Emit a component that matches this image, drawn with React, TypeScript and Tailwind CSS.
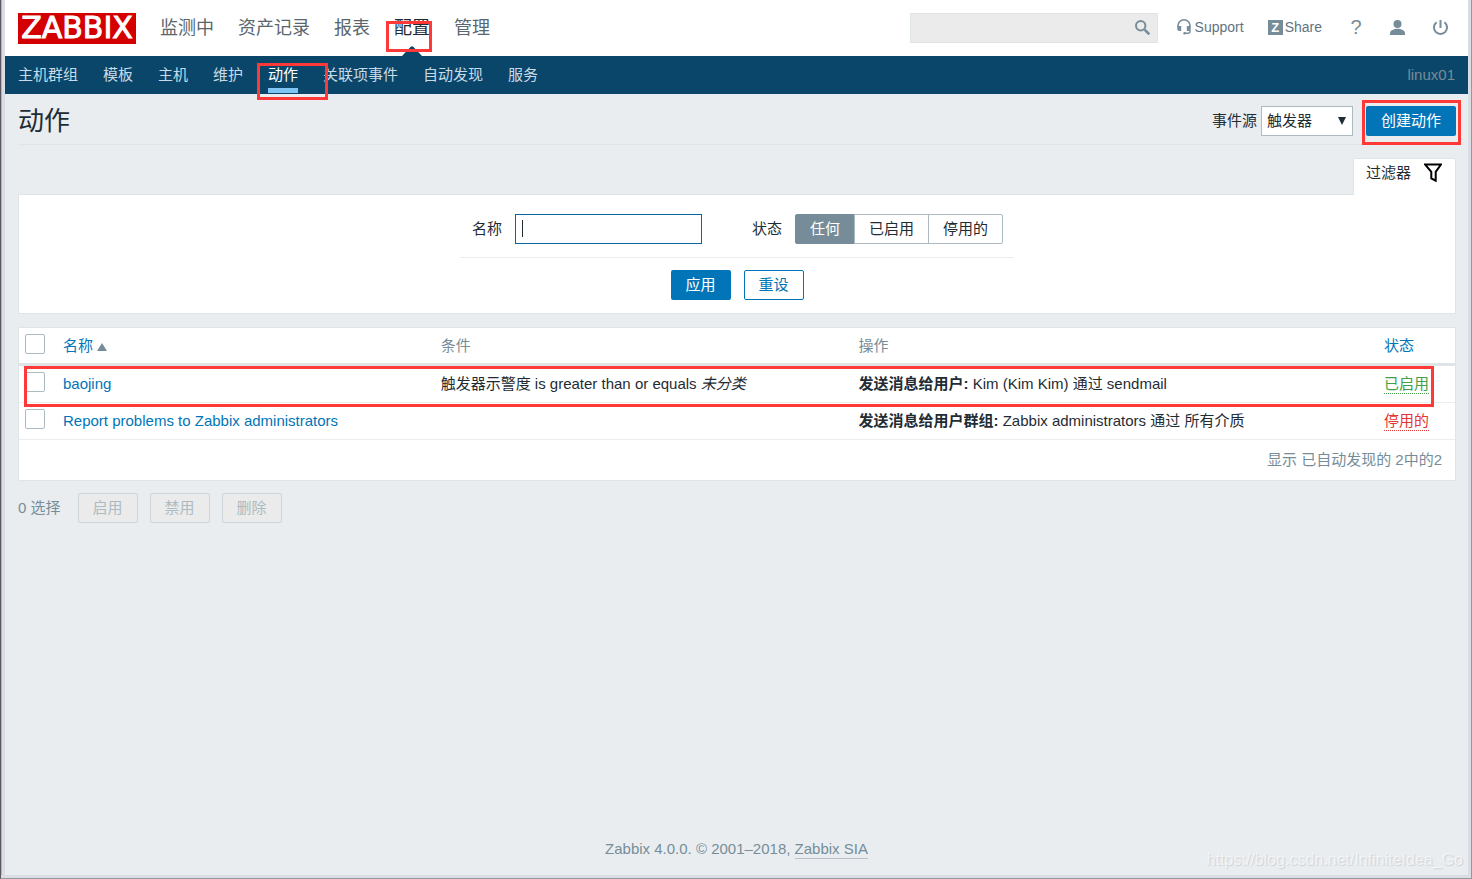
import React, { useState } from "react";

const topMenu = ["监测中", "资产记录", "报表", "配置", "管理"];
const subMenu = ["主机群组", "模板", "主机", "维护", "动作", "关联项事件", "自动发现", "服务"];

function Highlight({ className }: { className: string }) {
  return (
    <span
      aria-hidden="true"
      className={`pointer-events-none absolute z-10 border-3 border-[#ff3838] ${className}`}
    />
  );
}

function SearchIcon() {
  return (
    <svg width="15" height="15" viewBox="0 0 15 15" fill="none" stroke="#768d99">
      <circle cx="5.7" cy="5.7" r="4.7" strokeWidth="2" />
      <path d="M9.2 9.2l1 1" strokeWidth="1.6" />
      <path d="M10 10l4.3 4.3" strokeWidth="2.6" />
    </svg>
  );
}

function HeadsetIcon() {
  return (
    <svg width="14" height="16" viewBox="0 0 14 16" fill="none">
      <path d="M1 8V6.800a6 6 0 0 1 12 0V8" stroke="#768d99" strokeWidth="1.600" />
      <path d="M.3 7h3.900v5H2.100A1.800 1.800 0 0 1 .3 10.200zM13.700 7H9.800v5h2.100a1.800 1.800 0 0 0 1.800-1.800z" fill="#768d99" />
      <path d="M13 11v1.300a1.900 1.900 0 0 1-1.900 1.900H7" stroke="#768d99" strokeWidth="1.400" />
      <circle cx="7.600" cy="14.200" r="1.300" fill="#768d99" />
    </svg>
  );
}

function UserIcon() {
  return (
    <svg width="15" height="15" viewBox="0 0 15 15" fill="#768d99">
      <circle cx="7.500" cy="4" r="4" />
      <path d="M0 15v-1.700c0-2.800 4-4.500 7.500-4.500s7.500 1.700 7.500 4.500V15z" />
    </svg>
  );
}

function PowerIcon() {
  return (
    <svg width="15" height="15" viewBox="0 0 15 15" fill="none" stroke="#768d99" strokeWidth="2">
      <path d="M7.500 0v8" />
      <path d="M3.600 2.300a6.500 6.500 0 1 0 7.800 0" />
    </svg>
  );
}

function FunnelIcon() {
  return (
    <svg width="18" height="19" viewBox="0 0 18 19" fill="none" stroke="#000" strokeWidth="2">
      <path d="M1 1.500h16l-5.300 7.300v8.900l-4.400-2.400V8.800z" />
    </svg>
  );
}

function Header() {
  return (
    <header className="flex h-14 items-center bg-white px-[13px]">
      <a
        href="#home"
        className="flex h-[31px] w-[118px] items-center justify-center bg-[#d40000] font-['DejaVu_Sans',sans-serif] text-[30px] leading-none text-white [-webkit-text-stroke:1px_white]"
      >
        ZABBIX
      </a>
      <nav className="ml-6 flex h-full items-center gap-6 text-lg text-[#5a666d]">
        {topMenu.map((item) => {
          const active = item === "配置";
          return (
            <div key={item} className="relative flex h-full items-center">
              <a href="#menu" className={active ? "text-[#1f2c33]" : ""}>
                {item}
              </a>
              {active && (
                <>
                  <svg width="20" height="10" viewBox="0 0 20 10" className="absolute bottom-0 left-2" fill="#0a466a">
                    <path d="M0 10L8.500 1q1.500-1.500 3 0L20 10z" />
                  </svg>
                  <Highlight className="top-[21px] -left-2 h-[31px] w-[46px]" />
                </>
              )}
            </div>
          );
        })}
      </nav>
      <form className="ml-auto flex h-[30px] w-[248px] items-center justify-end border border-[#dfe4e7] bg-[#ebebeb] pr-[7px] pb-[2px] text-sm">
        <input aria-label="搜索" className="min-w-0 flex-1 bg-transparent px-2 outline-none" />
        <button type="button" aria-label="搜索">
          <SearchIcon />
        </button>
      </form>
      <div className="flex items-center pb-[2px] text-sm text-[#5f7480]">
        <a href="#support" className="ml-[19px] flex items-center gap-1">
          <HeadsetIcon />
          Support
        </a>
        <a href="#share" className="ml-6 flex items-center gap-[2px]">
          <span className="flex size-[15px] items-center justify-center bg-[#768d99] text-[13px] leading-none font-bold text-white">
            Z
          </span>
          Share
        </a>
        <a href="#help" className="ml-7 w-3 text-center text-xl leading-none text-[#768d99]">
          ?
        </a>
        <a href="#profile" aria-label="User profile" className="ml-7">
          <UserIcon />
        </a>
        <a href="#logout" aria-label="Sign out" className="mr-[7px] ml-7">
          <PowerIcon />
        </a>
      </div>
    </header>
  );
}

function SubNav() {
  return (
    <nav className="flex h-[38px] items-center bg-[#0a466a] px-[13px] text-[#c9dbe6]">
      <div className="flex h-full gap-[25px]">
        {subMenu.map((item) => {
          const active = item === "动作";
          return (
            <div key={item} className="relative flex h-full items-center">
              <a href="#sub" className={active ? "text-white" : ""}>
                {item}
              </a>
              {active && (
                <>
                  <span className="absolute inset-x-0 bottom-px h-[5px] bg-[#7fc6f5]" />
                  <Highlight className="top-[7px] -left-[11px] h-[37px] w-[71px]" />
                </>
              )}
            </div>
          );
        })}
      </div>
      <span className="ml-auto text-[#768d99]">linux01</span>
    </nav>
  );
}

function TitleBar() {
  return (
    <div className="flex h-[51px] items-center border-b border-[#dfe4e7] pt-1">
      <h1 className="text-[26px] leading-8">动作</h1>
      <div className="ml-auto flex items-center">
        <label htmlFor="source">事件源</label>
        <div className="relative ml-1">
          <select
            id="source"
            className="block h-[30px] w-[92px] appearance-none border border-[#acbbc2] bg-white px-[5px]"
          >
            <option>触发器</option>
          </select>
          <svg width="8" height="8" viewBox="0 0 8 8" className="pointer-events-none absolute top-[11px] right-[7px]">
            <path d="M0 0h8L4 8z" fill="#1f2c33" />
          </svg>
        </div>
        <div className="relative ml-[13px]">
          <button type="button" className="block h-[30px] w-[90px] rounded-xs bg-[#0275b8] text-white">
            创建动作
          </button>
          <Highlight className="-top-[6px] -left-1 h-[45px] w-[99px]" />
        </div>
      </div>
    </div>
  );
}

const states = ["任何", "已启用", "停用的"];

function Filter() {
  const [state, setState] = useState("任何");
  return (
    <section className="mt-[13px]">
      <div className="flex justify-end">
        <button
          type="button"
          className="relative -mb-px flex h-[37px] w-[103px] justify-between rounded-t-xs border border-b-0 border-[#dfe4e7] bg-white pt-1 pr-[13px] pl-[12px]"
        >
          <span>过滤器</span>
          <FunnelIcon />
        </button>
      </div>
      <form className="border border-[#dfe4e7] bg-white pt-[19px] pb-[13px]">
        <div className="mx-auto flex w-fit items-center border-b border-[#ebeef0] pr-[11px] pb-[13px] pl-3">
          <label htmlFor="name">名称</label>
          <div className="relative ml-[13px]">
            <input
              id="name"
              className="block h-[30px] w-[187px] border border-[#0a669e] px-[6px] caret-transparent outline-none"
            />
            <span className="absolute top-[6px] left-[7px] h-[17px] w-px bg-[#1f2c33]" />
          </div>
          <span className="ml-[50px]">状态</span>
          <div role="radiogroup" aria-label="状态" className="ml-[13px] flex">
            {states.map((s) => (
              <label key={s} className="relative -mr-px first:*:[span]:rounded-l-xs last:mr-0 last:*:[span]:rounded-r-xs">
                <input
                  type="radio"
                  name="state"
                  className="peer sr-only"
                  checked={state === s}
                  onChange={() => setState(s)}
                />
                <span className="flex h-[30px] items-center border border-[#acbbc2] px-[14px] peer-checked:border-[#768d99] peer-checked:bg-[#768d99] peer-checked:text-white">
                  {s}
                </span>
              </label>
            ))}
          </div>
        </div>
        <div className="mt-3 flex justify-center gap-[13px]">
          <button type="button" className="h-[30px] w-[60px] rounded-xs bg-[#0275b8] text-white">
            应用
          </button>
          <button type="reset" className="h-[30px] w-[60px] rounded-xs border border-[#0275b8] text-[#0275b8]">
            重设
          </button>
        </div>
      </form>
    </section>
  );
}

function Check({ label }: { label: string }) {
  return (
    <input
      type="checkbox"
      aria-label={label}
      className="block size-5 appearance-none rounded-xs border border-[#acbbc2] bg-white checked:bg-[#0275b8]"
    />
  );
}

function ActionsTable() {
  return (
    <div className="relative mt-[13px]">
      <table className="w-full table-fixed border-separate border-spacing-0 border border-[#dfe4e7] bg-white text-left">
        <colgroup>
          <col className="w-[38px]" />
          <col className="w-[26.3%]" />
          <col className="w-[29.1%]" />
          <col className="w-[36.6%]" />
          <col />
        </colgroup>
        <thead className="text-[#768d99] [&_th]:h-[38px] [&_th]:border-b-3 [&_th]:border-[#dfe4e7] [&_th]:px-[6px] [&_th]:font-normal">
          <tr>
            <th className="pb-1">
              <Check label="全选" />
            </th>
            <th>
              <a href="#sort" className="flex items-center gap-1 text-[#0275b8]">
                名称
                <svg width="10" height="8" viewBox="0 0 10 8" className="mt-[2px]" fill="#768d99">
                  <path d="M5 0l5 8H0z" />
                </svg>
              </a>
            </th>
            <th>条件</th>
            <th>操作</th>
            <th>
              <a href="#sort" className="text-[#0275b8]">
                状态
              </a>
            </th>
          </tr>
        </thead>
        <tbody className="[&_td]:h-[37px] [&_td]:border-b [&_td]:border-[#ebeef0] [&_td]:px-[6px]">
          <tr>
            <td className="pb-1">
              <Check label="baojing" />
            </td>
            <td>
              <a href="#baojing" className="text-[#0275b8]">
                baojing
              </a>
            </td>
            <td>
              触发器示警度 is greater than or equals <em>未分类</em>
            </td>
            <td>
              <b>发送消息给用户:</b> Kim (Kim Kim) 通过 sendmail
            </td>
            <td>
              <a href="#toggle" className="inline-block border-b border-dotted border-[#429e47] leading-[18px] text-[#429e47]">
                已启用
              </a>
            </td>
          </tr>
          <tr>
            <td className="pb-1">
              <Check label="Report problems to Zabbix administrators" />
            </td>
            <td>
              <a href="#report" className="text-[#0275b8]">
                Report problems to Zabbix administrators
              </a>
            </td>
            <td />
            <td>
              <b>发送消息给用户群组:</b> Zabbix administrators 通过 所有介质
            </td>
            <td>
              <a href="#toggle" className="inline-block border-b border-dotted border-[#e33734] leading-[18px] text-[#e33734]">
                停用的
              </a>
            </td>
          </tr>
        </tbody>
        <tfoot>
          <tr>
            <td colSpan={5} className="h-10 px-[13px] text-right text-[#768d99]">
              显示 已自动发现的 2中的2
            </td>
          </tr>
        </tfoot>
      </table>
      <Highlight className="top-[39px] right-[22px] left-[6px] h-[41px]" />
    </div>
  );
}

export default function App() {
  return (
    <div className="flex min-h-screen border-r border-b border-l border-[#96989c] border-l-[#5b5660] bg-[#dadee4] pr-[3px] pb-[3px] font-['Liberation_Sans','Noto_Sans_CJK_SC',sans-serif] text-[15px] leading-5 text-[#1f2c33]">
      <div className="flex min-w-0 flex-1 border-l border-[#b4b4ba] pl-[3px]">
        <div className="flex min-w-0 flex-1 flex-col bg-[#e9edf0]">
          <Header />
          <SubNav />
          <main className="pr-3 pl-[13px]">
            <TitleBar />
            <Filter />
            <ActionsTable />
            <div className="mt-3 flex items-center gap-3 text-[#768d99]">
              <span className="mr-[5px]">0 选择</span>
              {["启用", "禁用", "删除"].map((label) => (
                <button
                  key={label}
                  type="button"
                  disabled
                  className="h-[30px] w-[60px] rounded-xs border border-[#ccd5d9] bg-[#ebebeb] text-[#acbbc2]"
                >
                  {label}
                </button>
              ))}
            </div>
          </main>
          <footer className="relative mt-auto pt-10 pb-4 text-center text-[#768d99]">
            Zabbix 4.0.0. © 2001–2018,{" "}
            <a href="#zabbix" className="inline-block border-b border-[#b9c2ca] leading-[18px]">
              Zabbix SIA
            </a>
            <span className="absolute right-[5px] bottom-[3px] text-base text-white/60 [text-shadow:1px_1px_1px_#cdd1d5]">
              https://blog.csdn.net/InfiniteIdea_Go
            </span>
          </footer>
        </div>
      </div>
    </div>
  );
}
